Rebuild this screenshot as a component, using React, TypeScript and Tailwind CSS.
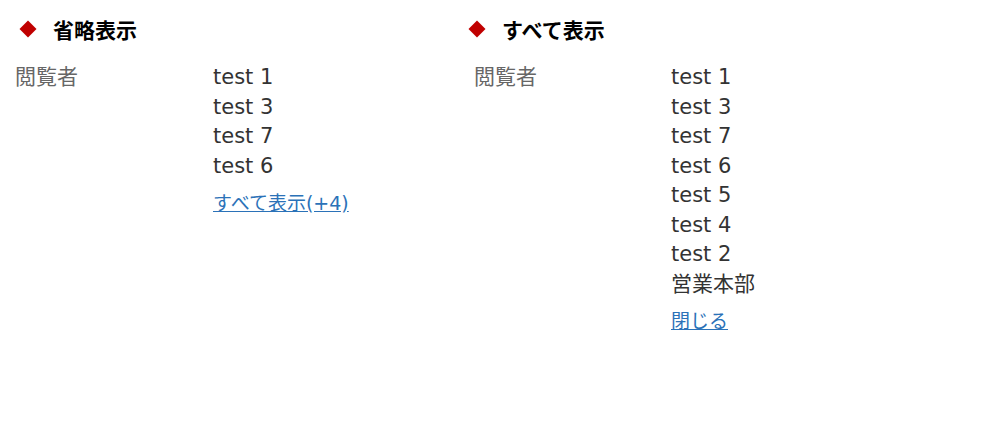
const font = '"DejaVu Sans", "Noto Sans CJK JP", sans-serif'

type Section = {
  title: string
  items: string[]
  link: string
}

const sections: Section[] = [
  { title: '省略表示', items: ['test 1', 'test 3', 'test 7', 'test 6'], link: 'すべて表示(+4)' },
  {
    title: 'すべて表示',
    items: ['test 1', 'test 3', 'test 7', 'test 6', 'test 5', 'test 4', 'test 2', '営業本部'],
    link: '閉じる',
  },
]

function Column({ section, first }: { section: Section; first: boolean }) {
  return (
    <div className="w-[458px] shrink-0">
      <div className={`flex items-center h-[24px] mt-[17px] ${first ? 'pl-[22px]' : 'pl-[13px]'}`}>
        <div className="w-[12px] h-[12px] rotate-45 bg-[#c00000]" />
        <h2
          className="ml-[19px] text-[21px] font-bold text-black leading-none"
          style={{ fontFamily: '"Noto Sans CJK JP", sans-serif' }}
        >
          {section.title}
        </h2>
      </div>
      <div className="flex mt-[22px]">
        <div className={`w-[213px] shrink-0 text-[21px] leading-[29.5px] text-[#666] ${first ? 'pl-[15px]' : 'pl-[16px]'}`}>閲覧者</div>
        <div>
          <ul className="text-[21px] leading-[29.5px] text-[#333]">
            {section.items.map((item) => (
              <li key={item}>{item}</li>
            ))}
          </ul>
          <a href="#" className="block mt-[10px] text-[19px] leading-[24px] text-[#2b72b8] underline">
            {section.link}
          </a>
        </div>
      </div>
    </div>
  )
}

export default function App() {
  return (
    <div className="w-[1008px] h-[432px] bg-white flex" style={{ fontFamily: font }}>
      {sections.map((s, i) => (
        <Column key={s.title} section={s} first={i === 0} />
      ))}
    </div>
  )
}
